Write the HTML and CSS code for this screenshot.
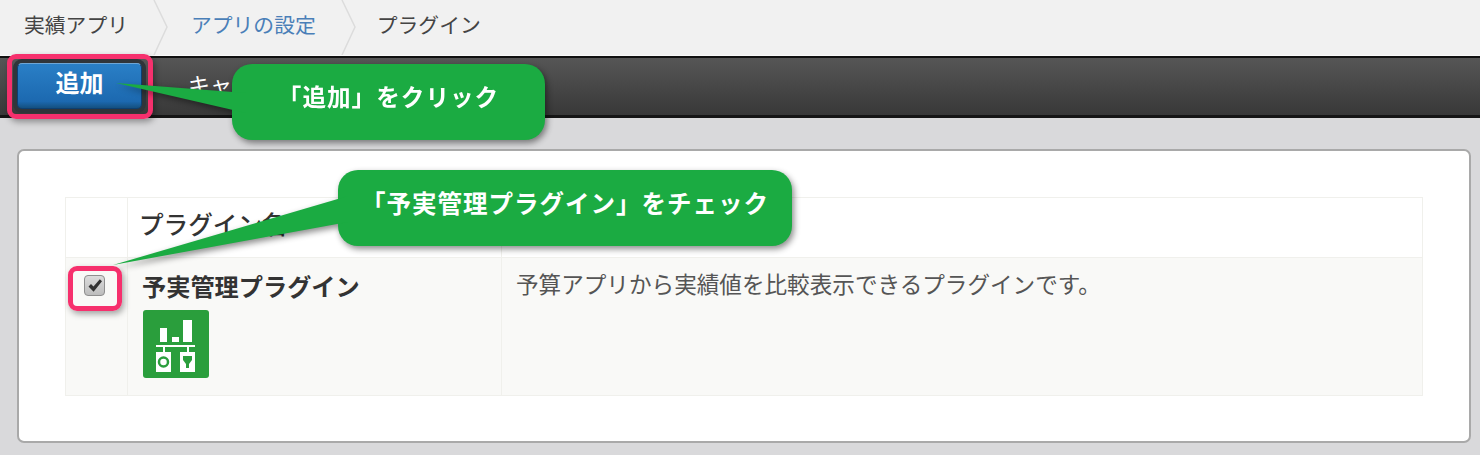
FILE: index.html
```html
<!DOCTYPE html>
<html lang="ja">

<head>
  <meta charset="UTF-8">
  <title>プラグイン</title>
  <link rel="stylesheet" href="styles.css">
</head>

<body>
  <nav class="crumbs">
    <span class="crumb crumb-first">実績アプリ</span>
    <svg class="chevron" width="16" height="55" viewBox="0 0 16 55"><path d="M1 0 L14 27 L1 55" /></svg>
    <a class="crumb crumb-link" href="#">アプリの設定</a>
    <svg class="chevron" width="16" height="55" viewBox="0 0 16 55"><path d="M1 0 L14 27 L1 55" /></svg>
    <span class="crumb crumb-last">プラグイン</span>
  </nav>

  <div class="toolbar">
    <button class="btn-add">追加</button>
    <span class="btn-cancel">キャンセル</span>
  </div>

  <main class="card">
    <table class="plugins">
      <tr class="head">
        <th class="col-check"></th>
        <th class="col-name">プラグイン名</th>
        <th></th>
      </tr>
      <tr class="row">
        <td class="cell-check">
          <span class="check">
            <svg width="16" height="15" viewBox="0 0 16 15"><path d="M1.5 8.5 L4 6 L6.5 8.6 L12.8 1.2 L15 3.2 L6.6 13.8 Z" /></svg>
          </span>
        </td>
        <td class="cell-name">
          <div class="plugin-name">予実管理プラグイン</div>
          <svg class="plugin-icon" width="66" height="68" viewBox="0 0 66 68">
            <rect width="66" height="68" rx="3" fill="#2a9e3c" />
            <g fill="#fff">
              <rect x="17" y="18" width="7" height="14" />
              <rect x="29" y="27" width="7" height="5" />
              <rect x="40" y="10" width="9" height="22" />
              <rect x="13" y="35" width="39" height="2" />
              <rect x="20" y="37" width="2" height="5" />
              <rect x="44" y="37" width="2" height="5" />
              <rect x="13" y="42" width="15" height="20" />
              <rect x="37" y="42" width="15" height="20" />
            </g>
            <circle cx="20.5" cy="52" r="4.5" fill="none" stroke="#2a9e3c" stroke-width="2.5" />
            <path d="M40 46 H49 V50 L46 54 V58 H43 V54 L40 50 Z" fill="#2a9e3c" />
          </svg>
        </td>
        <td class="cell-desc">予算アプリから実績値を比較表示できるプラグインです。</td>
      </tr>
    </table>
  </main>

  <!-- 注釈 -->
  <div class="mark mark-add"></div>
  <div class="mark mark-check"></div>

  <div class="callout callout-add">
    <svg class="tail" width="130" height="35" viewBox="0 0 130 35"><path d="M0 0 L130 10 L130 30 Z" /></svg>
    <div class="bubble">「追加」をクリック</div>
  </div>
  <div class="callout callout-check">
    <svg class="tail" width="235" height="70" viewBox="0 0 235 70"><path d="M0 69 L235 0 L235 26 Z" /></svg>
    <div class="bubble">「予実管理プラグイン」をチェック</div>
  </div>
</body>

</html>
```

FILE: styles.css
```css
html,
body {
  height: 100%;
}

body {
  margin: 0;
  overflow: hidden;
  background: #d9d9db;
  color: #333333;
  font-family: "Noto Sans CJK JP", "Noto Sans", sans-serif;
}

.crumbs {
  display: flex;
  align-items: flex-start;
  height: 55px;
  background: #f1f1f1;
  border-bottom: 1px solid #fafafa;
  overflow: hidden;
}

.crumb {
  font-size: 20.8px;
  line-height: 48px;
  margin: 0 25px 0 22px;
  color: #444444;
  white-space: nowrap;
  text-decoration: none;
}

.crumb-first {
  margin-left: 24px;
}

.crumb-last {
  margin-left: 20px;
}

.crumb-link {
  color: #4a7fb8;
}

.chevron {
  flex: none;
}

.chevron path {
  fill: none;
  stroke: #dcdcdc;
  stroke-width: 1.5;
}

.toolbar {
  display: flex;
  align-items: center;
  box-sizing: border-box;
  height: 62px;
  padding: 0 17px 2px;
  background: linear-gradient(#565656, #383838);
  border-top: 2px solid #111111;
  border-bottom: 3px solid #151515;
}

.btn-add {
  width: 125px;
  height: 46px;
  padding: 0 0 10px;
  border: 1px solid #0d3f70;
  border-top-color: #6ea6d6;
  border-radius: 5px;
  background: linear-gradient(#2a7fc6, #1c69b0 85%, #14507f);
  box-shadow: 0 0 0 4px #30353a;
  color: #ffffff;
  font-family: inherit;
  font-size: 24px;
  font-weight: bold;
}

.btn-cancel {
  margin-left: 46px;
  padding-bottom: 5px;
  color: #ffffff;
  font-size: 22px;
  white-space: nowrap;
}

.card {
  box-sizing: border-box;
  height: 294px;
  margin: 31px 9px 0 17px;
  padding: 46px 46px 0;
  background: #ffffff;
  border: 2px solid #a9a9a9;
  border-radius: 7px;
}

.plugins {
  width: 1358px;
  table-layout: fixed;
  border-collapse: collapse;
}

.plugins th,
.plugins td {
  box-sizing: border-box;
  border: 1px solid #f0f0ec;
  padding: 0;
  vertical-align: top;
  text-align: left;
}

.col-check {
  width: 62px;
}

.col-name {
  width: 374px;
}

.head th {
  height: 60px;
  padding-left: 11px;
  font-size: 24.6px;
  font-weight: 500;
  line-height: 50px;
  color: #333333;
}

.head .col-check {
  padding-left: 0;
}

.row td {
  height: 138px;
  background: #f9f9f7;
}

.check {
  display: flex;
  align-items: center;
  justify-content: center;
  box-sizing: border-box;
  width: 21px;
  height: 21px;
  margin: 17px 0 0 18px;
  border: 1px solid #8f8f8f;
  border-radius: 4px;
  background: linear-gradient(#dcdcdc, #bdbdbd);
}

.check path {
  fill: #333333;
}

.plugins .cell-name {
  padding-left: 14px;
}

.plugin-name {
  font-size: 24.2px;
  font-weight: bold;
  line-height: 30px;
  margin-top: 13px;
  color: #333333;
}

.plugin-icon {
  display: block;
  margin: 9px 0 0 1px;
  filter: blur(0.4px);
}

.plugins .cell-desc {
  padding: 11px 0 0 14px;
  font-size: 22.6px;
  line-height: 30px;
  color: #555555;
}

.mark {
  position: absolute;
  box-sizing: border-box;
  border: 5px solid #f6306d;
  border-radius: 9px;
  box-shadow: 2px 3px 6px rgba(0, 0, 0, 0.35);
}

.mark-add {
  left: 7px;
  top: 54px;
  width: 146px;
  height: 65px;
}

.mark-check {
  left: 68px;
  top: 266px;
  width: 54px;
  height: 45px;
}

.callout {
  position: absolute;
  filter: drop-shadow(2px 3px 3px rgba(0, 0, 0, 0.45));
}

.callout-add {
  left: 232px;
  top: 64px;
  width: 313px;
  height: 76px;
  font-size: 23.6px;
}

.callout-check {
  left: 338px;
  top: 170px;
  width: 454px;
  height: 76px;
  font-size: 24.5px;
}

.bubble {
  display: flex;
  align-items: center;
  justify-content: center;
  height: 100%;
  padding-bottom: 12px;
  box-sizing: border-box;
  border-radius: 20px;
  background: #1bab42;
  color: #ffffff;
  font-weight: bold;
  letter-spacing: 1px;
  white-space: nowrap;
}

.tail {
  position: absolute;
}

.tail path {
  fill: #1bab42;
}

.callout-add .tail {
  left: -116px;
  top: 19px;
}

.callout-check .tail {
  left: -225px;
  top: 26px;
}
```
